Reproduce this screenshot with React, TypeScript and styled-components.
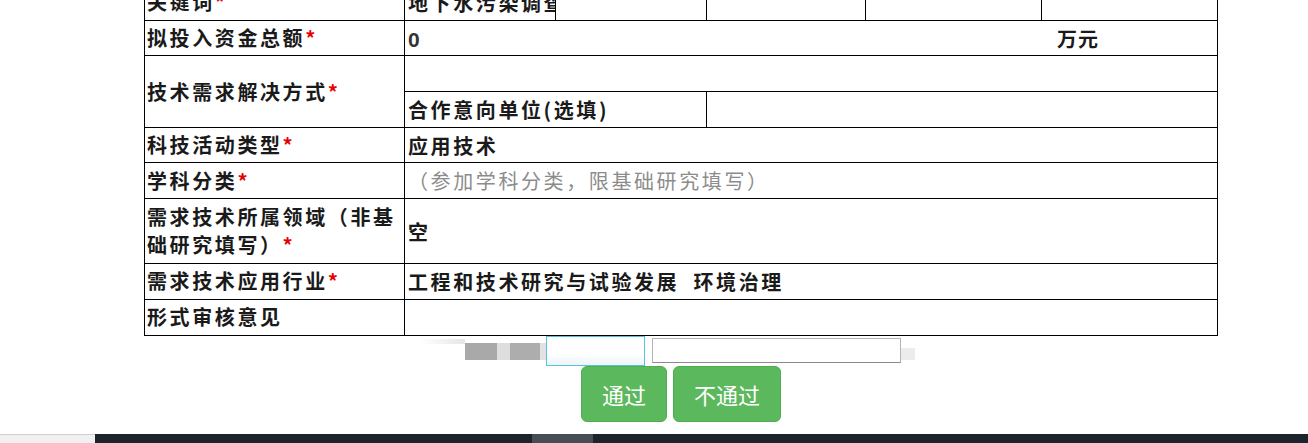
import React from "react";
import styled, { createGlobalStyle } from "styled-components";

const GlobalStyle = createGlobalStyle`
  html, body {
    margin: 0;
    padding: 0;
    background: #fff;
  }
  body {
    font-family: "Noto Sans CJK SC", "Noto Sans", sans-serif;
    overflow: hidden;
  }
`;

const Page = styled.div`
  height: 443px;
  display: flex;
  flex-direction: column;
  overflow: hidden;
`;

const Main = styled.div`
  padding-left: 144px;
  width: 1074px;
`;

const Table = styled.table`
  margin-top: -16px;
  width: 1074px;
  border-collapse: collapse;
  table-layout: fixed;
  font-size: 20px;
  letter-spacing: 2.6px;
  color: #1a1a1a;
  font-weight: 700;
`;

const Label = styled.td<{ $tall?: boolean }>`
  width: 255px;
  height: ${(p) => (p.$tall ? "64px" : "34.7px")};
  padding: 0 2px;
  border: 1px solid #000;
  vertical-align: middle;
  line-height: 28px;
  white-space: normal;
`;

const Star = styled.span`
  color: #e60000;
  font-weight: 700;
`;

const Value = styled.td<{ $muted?: boolean }>`
  height: 34.7px;
  padding: 0 3px;
  border: 1px solid #000;
  vertical-align: middle;
  white-space: nowrap;
  overflow: hidden;
  color: ${(p) => (p.$muted ? "#8c8c8c" : "#1a1a1a")};
  font-weight: ${(p) => (p.$muted ? 400 : 700)};
`;

const SplitValue = styled.td`
  padding: 0;
  border: 1px solid #000;
  height: 34.7px;
`;

const Split = styled.div`
  display: flex;
  height: 34.7px;
`;

const SplitCell = styled.div<{ $w?: number }>`
  box-sizing: border-box;
  width: ${(p) => (p.$w ? `${p.$w}px` : "auto")};
  flex: ${(p) => (p.$w ? "none" : 1)};
  border-right: 1px solid #000;
  display: flex;
  align-items: center;
  padding: 0 3px;
  overflow: hidden;
  white-space: nowrap;
  &:last-child {
    border-right: none;
  }
`;

const Amount = styled.span`
  display: inline-block;
  width: 649px;
  font-family: "Liberation Sans", Arial, sans-serif;
  font-weight: 700;
  font-size: 21px;
  color: #333;
  letter-spacing: 0;
`;

const Unit = styled.span`
  letter-spacing: 1px;
`;

const Scratch = styled.div`
  display: flex;
  height: 30px;
  padding-left: 276px;
`;

const Smudge = styled.div<{ $w: number; $h: number; $top: number; $bg: string }>`
  flex: none;
  width: ${(p) => p.$w}px;
  height: ${(p) => p.$h}px;
  margin-top: ${(p) => p.$top}px;
  background: ${(p) => p.$bg};
`;

const FocusBox = styled.div`
  flex: none;
  box-sizing: border-box;
  width: 99px;
  height: 30px;
  border: 1px solid #5bc0de;
  background: linear-gradient(#fff 60%, #eef4f8);
  margin-right: 7px;
`;

const PlainBox = styled.div`
  flex: none;
  box-sizing: border-box;
  width: 249px;
  height: 25px;
  margin-top: 2px;
  border: 1px solid #b5b5b5;
  border-bottom-color: #8a8a8a;
  background: #fff;
`;

const Actions = styled.div`
  display: flex;
  justify-content: center;
  gap: 6px;
`;

const Button = styled.button`
  box-sizing: border-box;
  height: 56px;
  padding: 0 20px;
  background: #5cb85c;
  border: 1px solid #4cae4c;
  border-radius: 6px;
  color: #fff;
  font-size: 22px;
  font-family: "Noto Sans CJK SC", sans-serif;
  cursor: pointer;
`;

const Footer = styled.div`
  margin-top: auto;
  height: 9px;
  display: flex;
`;

const FooterStub = styled.div`
  width: 95px;
  box-sizing: border-box;
  background: #f0f0f0;
  border-top: 1px solid #cfcfcf;
`;

const Track = styled.div`
  flex: 1;
  background: #1c232b;
  padding-left: 437px;
`;

const Thumb = styled.div`
  width: 61px;
  height: 100%;
  background: #464d55;
`;

const keywords = ["地下水污染调查", "", "", "", ""];
const keywordWidths = [151, 151, 159, 176];

const App = (): JSX.Element => {
  return (
    <Page>
      <GlobalStyle />
      <Main>
        <Table>
          <tbody>
            <tr>
              <Label>
                关键词<Star>*</Star>
              </Label>
              <SplitValue>
                <Split>
                  {keywords.map((k, i) => (
                    <SplitCell key={i} $w={keywordWidths[i]}>
                      {k}
                    </SplitCell>
                  ))}
                </Split>
              </SplitValue>
            </tr>
            <tr>
              <Label>
                拟投入资金总额<Star>*</Star>
              </Label>
              <Value>
                <Amount>0</Amount>
                <Unit>万元</Unit>
              </Value>
            </tr>
            <tr>
              <Label rowSpan={2}>
                技术需求解决方式<Star>*</Star>
              </Label>
              <Value />
            </tr>
            <tr>
              <SplitValue>
                <Split>
                  <SplitCell $w={302}>合作意向单位(选填)</SplitCell>
                  <SplitCell />
                </Split>
              </SplitValue>
            </tr>
            <tr>
              <Label>
                科技活动类型<Star>*</Star>
              </Label>
              <Value>应用技术</Value>
            </tr>
            <tr>
              <Label>
                学科分类<Star>*</Star>
              </Label>
              <Value $muted>（参加学科分类，限基础研究填写）</Value>
            </tr>
            <tr>
              <Label $tall>
                需求技术所属领域（非基础研究填写）<Star>*</Star>
              </Label>
              <Value>空</Value>
            </tr>
            <tr>
              <Label>
                需求技术应用行业<Star>*</Star>
              </Label>
              <Value>工程和技术研究与试验发展&nbsp; 环境治理</Value>
            </tr>
            <tr>
              <Label>形式审核意见</Label>
              <Value />
            </tr>
          </tbody>
        </Table>
        <Scratch>
          <Smudge $w={45} $h={5} $top={3} $bg="linear-gradient(90deg, #fff, #e6e6e6)" />
          <Smudge $w={32} $h={17} $top={7} $bg="#a9a9a9" />
          <Smudge $w={13} $h={17} $top={7} $bg="#dedede" />
          <Smudge $w={30} $h={17} $top={7} $bg="#adadad" />
          <Smudge $w={6} $h={17} $top={7} $bg="#e2e2e2" />
          <FocusBox />
          <PlainBox />
          <Smudge $w={14} $h={12} $top={12} $bg="#ececec" />
        </Scratch>
        <Actions>
          <Button>通过</Button>
          <Button>不通过</Button>
        </Actions>
      </Main>
      <Footer>
        <FooterStub />
        <Track>
          <Thumb />
        </Track>
      </Footer>
    </Page>
  );
};

export default App;
